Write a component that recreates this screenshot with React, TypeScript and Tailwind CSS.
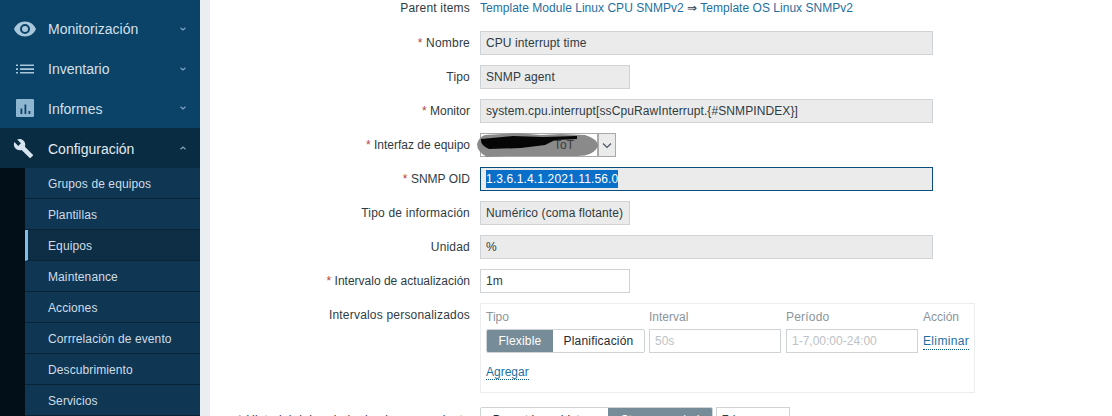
import React from "react";

const font = "[font-family:'Liberation_Sans',Arial,sans-serif]";

function Eye() {
  return (
    <svg width="24" height="24" viewBox="0 0 24 24" fill="#a9c8dc">
      <path d="M12 4.500C7 4.500 2.730 7.610 1 12c1.730 4.390 6 7.500 11 7.500s9.270-3.110 11-7.500c-1.730-4.390-6-7.500-11-7.500zM12 17a5 5 0 1 1 0-10 5 5 0 0 1 0 10zm0-8a3 3 0 1 0 0 6 3 3 0 0 0 0-6z" />
    </svg>
  );
}
function ListI() {
  return (
    <svg width="24" height="24" viewBox="0 0 24 24" fill="#a9c8dc">
      <path d="M3 7.500h2v1.600H3zM3 11.300h2v1.600H3zM3 15h2v1.600H3zM7 7.500h14v1.600H7zM7 11.300h14v1.600H7zM7 15h14v1.600H7z" />
    </svg>
  );
}
function Chart() {
  return (
    <svg width="24" height="24" viewBox="0 0 24 24" fill="#8fb6d0">
      <path fillRule="evenodd" d="M4 3h16a1 1 0 0 1 1 1v16a1 1 0 0 1-1 1H4a1 1 0 0 1-1-1V4a1 1 0 0 1 1-1zm3.500 9.500V18h1.800v-5.500zm4-4V18h1.800V8.500zm4 6.500v3h1.800v-3z" />
    </svg>
  );
}
function Wrench() {
  return (
    <svg width="21" height="21" viewBox="0 0 24 24" fill="#d5e4ef">
      <path d="M22.700 19l-9.100-9.100c.9-2.300.4-5-1.500-6.900-2-2-5-2.400-7.400-1.300L9 6 6 9 1.600 4.700C.4 7.100.9 10.100 2.900 12.100c1.900 1.900 4.600 2.400 6.900 1.500l9.100 9.100c.4.400 1 .4 1.400 0l2.300-2.300c.5-.4.5-1.100.1-1.400z" />
    </svg>
  );
}
function Chev({ up, color = "#7fa5bf" }: { up?: boolean; color?: string }) {
  return (
    <svg width="8" height="6" viewBox="0 0 8 6" fill="none" stroke={color} strokeWidth="1.200">
      <path d={up ? "M1.500 4.200 4 2 6.500 4.200" : "M1.500 1.800 4 4 6.500 1.800"} />
    </svg>
  );
}

function MainItem({ icon, label, open }: { icon: React.ReactNode; label: string; open?: boolean }) {
  return (
    <div className={`flex h-10 items-center ${open ? "bg-[#0a2c42] text-[#e2eaf0]" : "text-[#d3e0ea]"}`}>
      <div className="ml-[13px] flex w-[35px] shrink-0 items-center">{icon}</div>
      <span className="flex-1 pt-[2px] text-[14px]">{label}</span>
      <span className="mr-[13px] flex"><Chev up={open} /></span>
    </div>
  );
}

function SubItem({ label, active }: { label: string; active?: boolean }) {
  return (
    <div
      className={`flex h-[31px] shrink-0 items-center border-b border-[#0a2437] pt-[2px] text-[12px] tracking-[0.1px] ${
        active ? "border-l-[3px] border-l-[#7ec0ec] bg-[#0e2e45] pl-5" : "pl-[23px]"
      } text-[#d0dde6]`}
    >
      {label}
    </div>
  );
}

function Label({ req, tight, children }: { req?: boolean; tight?: boolean; children: React.ReactNode }) {
  return (
    <div
      className={`w-[150px] shrink-0 whitespace-nowrap text-right text-[12px] leading-[14px] text-[#2f3b43] ${
        tight ? "" : "tracking-[0.2px]"
      }`}
    >
      {req && <span className="text-[#b5443f]">* </span>}
      {children}
    </div>
  );
}

function Row({ label, req, tight, children }: { label: string; req?: boolean; tight?: boolean; children: React.ReactNode }) {
  return (
    <div className="flex h-6 shrink-0 items-center">
      <Label req={req} tight={tight}>{label}</Label>
      <div className="ml-[10px] flex flex-1 items-center">{children}</div>
    </div>
  );
}

function Field({ w, children, white }: { w: string; children?: React.ReactNode; white?: boolean }) {
  return (
    <div
      className={`flex h-6 ${w} items-center whitespace-nowrap border border-[#cdd3d6] px-[5px] text-[12px] tracking-[0.1px] text-[#2f3b43] ${
        white ? "bg-white" : "bg-[#ebebeb]"
      }`}
    >
      {children}
    </div>
  );
}

function Redaction() {
  return (
    <svg className="absolute -left-[4px] -top-[1px]" width="122" height="25" viewBox="0 0 122 25">
      <path d="M8 2 L40 0 L64 2 L84 1 L108 2 Q121 6 121 13 Q117 23 100 23 L60 23 L30 23 L10 24 Q0 19 0 11 Q2 4 8 2z" fill="#8a8a8a" />
      <path d="M4 6 L36 3 L66 4 L100 3 L100 6 L78 7 L68 12 L44 15 L12 16 Q3 12 4 6z" fill="#060606" />
    </svg>
  );
}

export default function App() {
  return (
    <div className={`flex h-[416px] w-[1112px] overflow-hidden bg-white ${font}`}>
      <aside className="flex h-[416px] w-[200px] shrink-0 flex-col overflow-hidden bg-[#0a4268] pt-[9px]">
        <MainItem icon={<Eye />} label="Monitorización" />
        <MainItem icon={<ListI />} label="Inventario" />
        <MainItem icon={<Chart />} label="Informes" />
        <MainItem icon={<Wrench />} label="Configuración" open />
        <div className="flex flex-1 bg-[#020f18]">
          <div className="w-[25px] shrink-0" />
          <div className="flex flex-1 flex-col bg-[#0f3754]">
            <SubItem label="Grupos de equipos" />
            <SubItem label="Plantillas" />
            <SubItem label="Equipos" active />
            <SubItem label="Maintenance" />
            <SubItem label="Acciones" />
            <SubItem label="Corrrelación de evento" />
            <SubItem label="Descubrimiento" />
            <SubItem label="Servicios" />
          </div>
        </div>
      </aside>
      <div className="h-[416px] w-[10px] shrink-0 bg-[#ebeef0]" />
      <main className="flex min-w-0 flex-1 flex-col gap-[10px] overflow-hidden pl-[110px]">
        <div className="mb-[5px] flex h-4 shrink-0 items-center">
          <Label>Parent items</Label>
          <span className="ml-[10px] whitespace-nowrap text-[12px] tracking-[0.03px] text-[#1f6f9f]">
            Template Module Linux CPU SNMPv2 <span className="text-[#2f3b43]">⇒</span> Template OS Linux SNMPv2
          </span>
        </div>
        <Row label="Nombre" req><Field w="w-[453px]">CPU interrupt time</Field></Row>
        <Row label="Tipo"><Field w="w-[150px]">SNMP agent</Field></Row>
        <Row label="Monitor" req tight><Field w="w-[453px]">system.cpu.interrupt[ssCpuRawInterrupt.{"{#SNMPINDEX}"}]</Field></Row>
        <Row label="Interfaz de equipo" req tight>
          <div className="flex">
            <div className="relative h-6 w-[118px] border border-[#a9a9a9] bg-white">
              <Redaction />
              <span className="absolute right-[23px] top-[4px] text-[12px] leading-[14px] text-[#3a3a3a]">ToT</span>
            </div>
            <div className="flex h-6 w-[18px] items-center justify-center border border-[#a9a9a9] bg-[#ebebeb]">
              <svg width="10" height="7" viewBox="0 0 10 7" fill="none" stroke="#4a5560" strokeWidth="1.200"><path d="M1 1.500 5 5.500 9 1.500" /></svg>
            </div>
          </div>
        </Row>
        <Row label="SNMP OID" req tight>
          <div className="flex h-6 w-[453px] items-center border border-[#0a4c7c] bg-[#ebebeb] px-[5px] text-[12px] tracking-[0.13px]">
            <span className="bg-[#0a6fc8] text-white">1.3.6.1.4.1.2021.11.56.0</span>
          </div>
        </Row>
        <Row label="Tipo de información"><Field w="w-[150px]">Numérico (coma flotante)</Field></Row>
        <Row label="Unidad"><Field w="w-[453px]">%</Field></Row>
        <Row label="Intervalo de actualización" req tight><Field w="w-[150px]" white>1m</Field></Row>
        <div className="flex h-[90px] shrink-0 items-start">
          <div className="w-[150px] shrink-0 whitespace-nowrap pt-[5px] text-right text-[12px] leading-[14px] tracking-[0.2px] text-[#2f3b43]">Intervalos personalizados</div>
          <div className="ml-[10px] h-[90px] w-[495px] shrink-0 border border-[#ebeef0] pl-[5px] pt-[5px] text-[12px]">
            <div className="flex h-[15px] items-center text-[#8a959c]">
              <span className="w-[163px]">Tipo</span>
              <span className="w-[137px]">Interval</span>
              <span className="w-[137px] tracking-[0.2px]">Período</span>
              <span>Acción</span>
            </div>
            <div className="mt-[5px] flex h-6 items-center">
              <div className="flex h-6 w-[159px] overflow-hidden rounded-[2px] border border-[#cdd3d6] tracking-[0.2px]">
                <span className="flex w-[66px] items-center justify-center bg-[#768d99] text-white">Flexible</span>
                <span className="flex flex-1 items-center justify-center text-[#1f2c33]">Planificación</span>
              </div>
              <div className="ml-[4px] flex h-6 w-[132px] items-center border border-[#cdd3d6] px-[5px] text-[#bcc2c6]">50s</div>
              <div className="ml-[5px] flex h-6 w-[132px] items-center border border-[#cdd3d6] px-[5px] text-[#bcc2c6]">1-7,00:00-24:00</div>
              <span className="ml-[5px] mt-[2px] border-b border-dotted border-[#0a5f8f] leading-[15px] tracking-[0.35px] text-[#1f6f9f]">Eliminar</span>
            </div>
            <div className="mt-[10px]">
              <span className="border-b border-dotted border-[#0a5f8f] text-[#1f6f9f]">Agregar</span>
            </div>
          </div>
        </div>
        <div className="mt-[4px] flex h-6 shrink-0 items-start">
          <div className="w-[150px] shrink-0 whitespace-nowrap pt-[6px] text-right text-[12px] leading-[14px] tracking-[0.25px] text-[#2f3b43] [direction:rtl]">
            <span className="[direction:ltr] [unicode-bidi:isolate]"><span className="text-[#b5443f]">* </span>Historial del periodo de almacenamiento</span>
          </div>
          <div className="ml-[10px] flex">
            <div className="flex h-6 w-[233px] overflow-hidden rounded-[2px] border border-[#cdd3d6] text-[12px]">
              <span className="flex w-[127px] items-center justify-center pt-[2px] text-[#1f2c33]">Do not keep history</span>
              <span className="flex flex-1 items-center justify-center bg-[#768d99] pt-[2px] text-white">Storage period</span>
            </div>
            <div className="ml-[3px] flex h-6 w-[74px] items-center border border-[#cdd3d6] px-[5px] pt-[2px] text-[12px] text-[#2f3b43]">7d</div>
          </div>
        </div>
      </main>
    </div>
  );
}
